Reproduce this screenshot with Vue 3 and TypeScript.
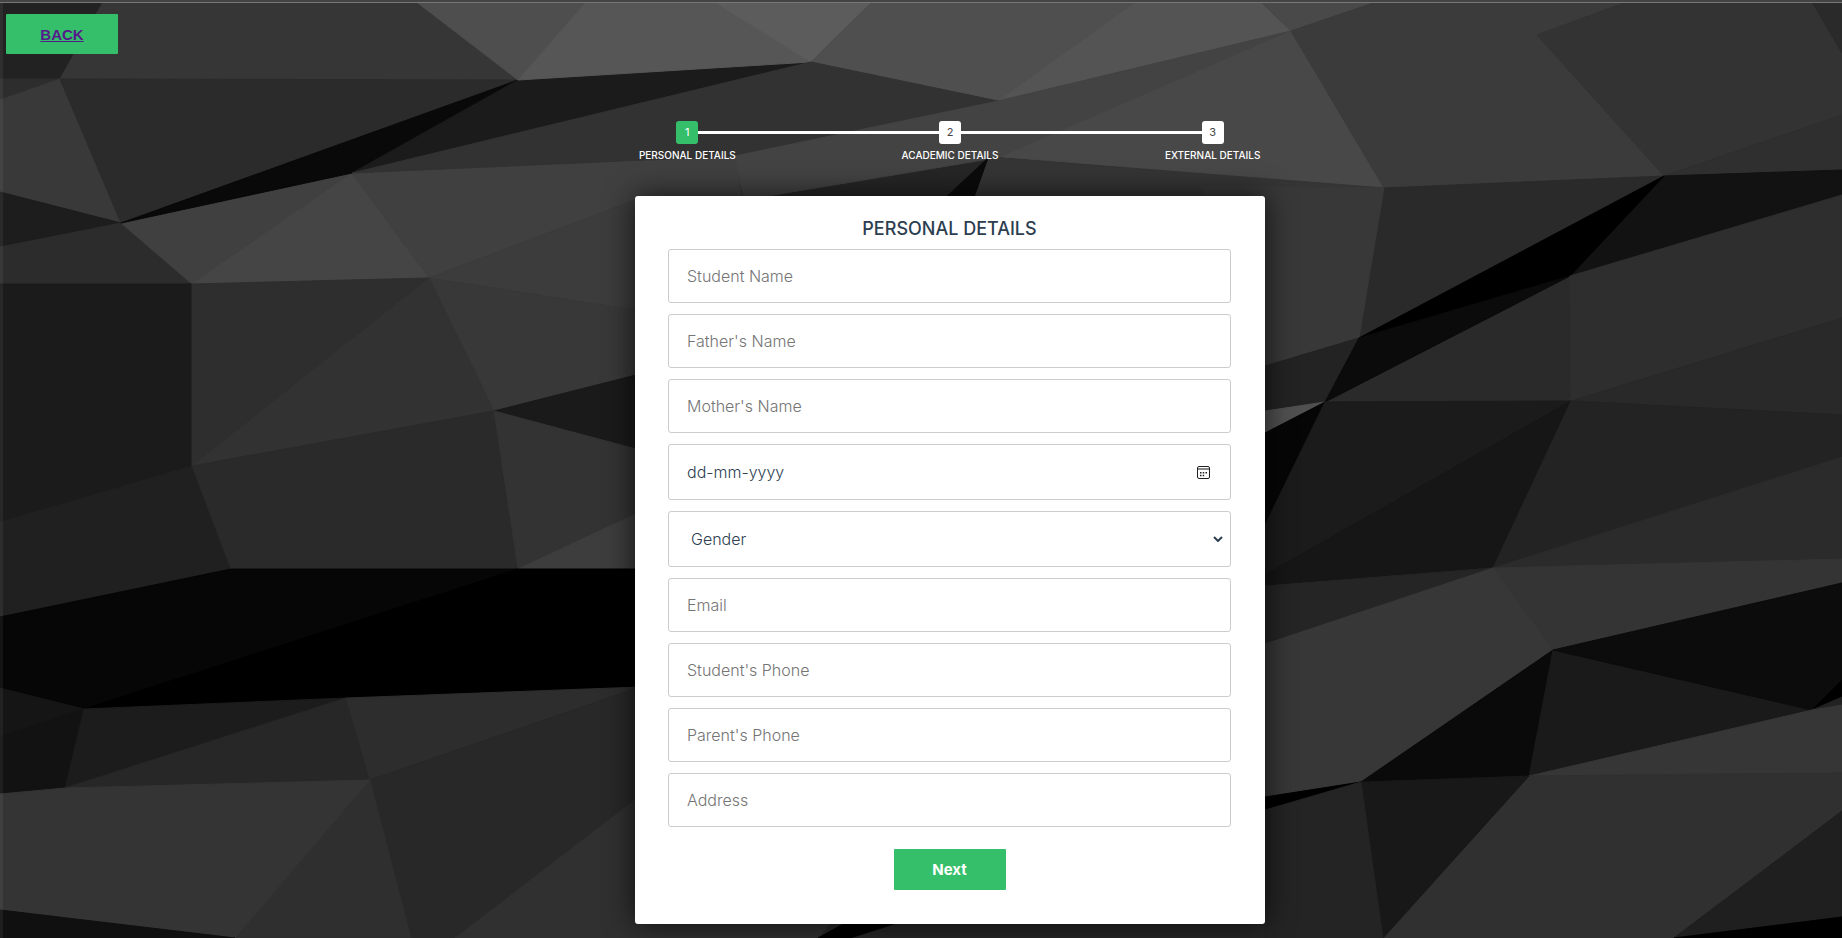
<script setup lang="ts">
import { reactive } from 'vue'

interface Facet {
  points: string
  fill: string
}

interface Field {
  id: string
  label: string
  kind: 'text' | 'email' | 'tel' | 'date' | 'select'
}

const steps: string[] = ['Personal Details', 'Academic Details', 'External Details']

const fields: Field[] = [
  { id: 'student', label: 'Student Name', kind: 'text' },
  { id: 'father', label: "Father's Name", kind: 'text' },
  { id: 'mother', label: "Mother's Name", kind: 'text' },
  { id: 'birth', label: 'dd-mm-yyyy', kind: 'date' },
  { id: 'gender', label: 'Gender', kind: 'select' },
  { id: 'email', label: 'Email', kind: 'email' },
  { id: 'phone', label: "Student's Phone", kind: 'tel' },
  { id: 'parentPhone', label: "Parent's Phone", kind: 'tel' },
  { id: 'address', label: 'Address', kind: 'text' },
]

const values = reactive<Record<string, string>>(
  Object.fromEntries(fields.map((f) => [f.id, ''])),
)

const facet = (fill: string, points: string): Facet => ({ fill, points })

const facets: Facet[] = [
  // upper left
  facet('#222222', '0,0 104,0 60,79 0,79'),
  facet('#363636', '104,0 414,0 518,80 60,79'),
  facet('#2d2d2d', '0,79 60,79 0,100'),
  facet('#393939', '60,79 0,100 0,192 121,223'),
  facet('#2b2b2b', '60,79 518,80 121,223'),
  facet('#1d1d1d', '0,192 121,223 0,247'),
  facet('#2c2c2c', '0,247 121,223 192,284 0,284'),
  facet('#404040', '121,223 352,173 192,284'),
  facet('#454545', '352,173 429,278 192,284'),
  facet('#404040', '352,173 735,156 744,210 635,200 429,278'),
  facet('#3c3c3c', '429,278 635,200 744,200 744,400 635,310'),
  facet('#383838', '429,278 635,310 635,375 494,411'),
  facet('#090909', '121,223 518,80 352,173'),
  facet('#1b1b1b', '518,80 811,62 352,173'),
  // upper middle
  facet('#4e4e4e', '414,0 588,0 518,80'),
  facet('#565656', '588,0 711,0 811,62 518,80'),
  facet('#5c5c5c', '711,0 874,0 811,62'),
  facet('#4f4f4f', '874,0 1139,0 998,101 811,62'),
  facet('#545454', '1139,0 1259,0 1291,31 998,101'),
  facet('#323232', '811,62 998,101 735,156 352,173'),
  facet('#434343', '998,101 1291,31 1001,157 744,200 735,156'),
  facet('#484848', '1291,31 1384,188 1001,157'),
  facet('#353535', '988,157 1384,188 1265,300 973,200'),
  facet('#0b0b0b', '988,158 973,200 943,200'),
  facet('#494949', '1259,0 1382,0 1291,31'),
  // upper right
  facet('#3b3b3b', '1382,0 1632,0 1537,35 1664,176 1384,188 1291,31'),
  facet('#333333', '1632,0 1811,0 1842,53 1842,115 1664,176 1537,35'),
  facet('#2a2a2a', '1811,0 1842,0 1842,53'),
  facet('#2f2f2f', '1664,176 1842,115 1842,170'),
  facet('#121212', '1664,176 1842,170 1842,195 1570,276'),
  facet('#2a2a2a', '1384,188 1664,176 1359,338'),
  facet('#383838', '1384,188 1359,338 1265,366 1200,186'),
  facet('#232323', '1359,338 1325,402 1265,411 1265,366'),
  facet('#505050', '1325,402 1265,433 1265,411'),
  facet('#2a2a2a', '1570,276 1325,402 1571,401'),
  facet('#000000', '1664,176 1570,276 1359,338'),
  facet('#0b0b0b', '1359,338 1570,276 1325,402'),
  facet('#2e2e2e', '1570,276 1842,195 1842,318 1571,401'),
  facet('#292929', '1571,401 1842,318 1842,415'),
  // lower right
  facet('#060606', '1325,402 1265,525 1265,433'),
  facet('#1b1b1b', '1325,402 1571,401 1265,575 1265,525'),
  facet('#161616', '1571,401 1493,568 1265,586 1265,575'),
  facet('#232323', '1571,401 1842,415 1842,457 1493,568'),
  facet('#2b2b2b', '1493,568 1842,457 1842,559'),
  facet('#343434', '1493,568 1842,559 1842,583 1553,650'),
  facet('#252525', '1493,568 1265,586 1265,644'),
  facet('#373737', '1493,568 1553,650 1361,782 1265,797 1265,644'),
  facet('#0a0a0a', '1553,650 1361,782 1529,776'),
  facet('#1a1a1a', '1553,650 1529,776 1812,710'),
  facet('#0c0c0c', '1553,650 1842,583 1842,680 1812,710'),
  facet('#000000', '1812,710 1842,680 1842,697'),
  facet('#222222', '1812,710 1842,697 1842,705'),
  facet('#363636', '1529,776 1812,710 1842,705 1842,773'),
  facet('#303030', '1529,776 1842,773 1842,811 1674,938 1383,938'),
  facet('#181818', '1361,782 1529,776 1383,938'),
  facet('#000000', '1361,782 1265,797 1265,810'),
  facet('#242424', '1361,782 1265,810 1265,938 1383,938'),
  facet('#1f1f1f', '1842,811 1842,917 1674,938'),
  facet('#000000', '1842,917 1842,938 1674,938'),
  // lower left
  facet('#1b1b1b', '0,284 192,284 192,466 0,522'),
  facet('#202020', '0,522 192,466 231,569 0,617'),
  facet('#2e2e2e', '192,284 429,278 192,466'),
  facet('#323232', '429,278 494,411 192,466'),
  facet('#2a2a2a', '494,411 518,569 231,569 192,466'),
  facet('#1a1a1a', '494,411 640,374 640,450'),
  facet('#333333', '494,411 640,450 640,512 518,569'),
  facet('#3d3d3d', '518,569 640,512 640,569'),
  facet('#060606', '0,617 231,569 518,569 84,709 0,688'),
  facet('#000000', '518,569 640,569 640,687 84,709'),
  facet('#151515', '0,688 84,709 0,737'),
  facet('#121212', '84,709 65,788 0,794 0,737'),
  facet('#1c1c1c', '84,709 346,698 65,788'),
  facet('#272727', '346,698 370,780 65,788'),
  facet('#2d2d2d', '346,698 640,687 370,780'),
  facet('#282828', '370,780 640,687 640,796 455,938 411,938'),
  facet('#2f2f2f', '370,780 411,938 235,938'),
  facet('#343434', '65,788 370,780 235,938 0,910 0,794'),
  facet('#101010', '0,910 235,938 0,938'),
  facet('#303030', '640,796 850,900 818,938 455,938'),
  facet('#000000', '818,938 847,922 900,922 850,938'),
]
</script>

<template>
  <div class="page">
    <svg class="backdrop" viewBox="0 0 1842 938" preserveAspectRatio="none" aria-hidden="true">
      <rect width="1842" height="938" fill="#262626" />
      <polygon
        v-for="(f, i) in facets"
        :key="i"
        :points="f.points"
        :fill="f.fill"
        :stroke="f.fill"
        stroke-width="1"
      />
      <rect y="3" width="3" height="935" fill="#ffffff" fill-opacity="0.06" />
      <rect width="1842" height="2" fill="#444444" />
      <rect y="2" width="1842" height="1" fill="#777777" />
    </svg>

    <nav class="top">
      <a class="button back" href="#">BACK</a>
    </nav>

    <main class="main">
      <ol class="steps">
        <li v-for="(step, i) in steps" :key="step" class="step" :class="{ active: i === 0 }">
          <span class="number">{{ i + 1 }}</span>
          <span class="caption">{{ step }}</span>
        </li>
      </ol>

      <form class="card" @submit.prevent>
        <h2 class="title">Personal Details</h2>
        <div class="fields">
          <template v-for="f in fields" :key="f.id">
            <div v-if="f.kind === 'date'" class="field tall date">
              <input
                v-model="values[f.id]"
                class="date-input"
                type="text"
                :placeholder="f.label"
                aria-label="Date of birth"
              />
              <button class="picker" type="button" aria-label="Open calendar">
                <svg width="13" height="13" viewBox="0 0 13 13" aria-hidden="true">
                  <rect x="0.5" y="0.5" width="12" height="12" rx="1.5" fill="none" stroke="#222" />
                  <rect x="1" y="2" width="11" height="2" fill="#888" />
                  <path
                    d="M3 6h1.5v1.5H3zM5.7 6h1.5v1.5H5.7zM8.5 6h1.5v1.5H8.5zM3 8.7h1.5v1.5H3zM5.7 8.7h1.5v1.5H5.7z"
                    fill="#222"
                  />
                </svg>
              </button>
            </div>
            <div v-else-if="f.kind === 'select'" class="choice">
              <select v-model="values[f.id]" class="field tall select" :aria-label="f.label">
                <option value="">Gender</option>
                <option value="male">Male</option>
                <option value="female">Female</option>
              </select>
              <svg class="chevron" width="10" height="6" viewBox="0 0 10 6" aria-hidden="true">
                <path d="M1 1l4 4 4-4" fill="none" stroke="#2c3e50" stroke-width="2" />
              </svg>
            </div>
            <input
              v-else
              v-model="values[f.id]"
              class="field"
              :type="f.kind"
              :placeholder="f.label"
              :aria-label="f.label"
            />
          </template>
        </div>
        <button class="button next" type="submit">Next</button>
      </form>
    </main>
  </div>
</template>

<style>
body {
  margin: 0;
  background: #262626;
}
</style>

<style scoped>
.page {
  position: relative;
  box-sizing: border-box;
  min-height: 100vh;
  padding: 14px 6px 12px;
  font-family: Inter, 'Open Sans', sans-serif;
  color: #2c3e50;
}

.backdrop {
  position: absolute;
  inset: 0;
  width: 100%;
  height: 100%;
}

.top,
.main {
  position: relative;
}

.top {
  display: flex;
}

.button {
  display: flex;
  align-items: center;
  justify-content: center;
  box-sizing: border-box;
  width: 112px;
  height: 40px;
  border: 0;
  border-radius: 1px;
  background: #36bf6a;
  font-size: 15px;
  font-weight: 700;
  cursor: pointer;
}

.back {
  font-family: 'Liberation Sans', Arial, sans-serif;
  color: #551a8b;
  text-decoration: underline;
}

.main {
  display: flex;
  flex-direction: column;
  align-items: center;
  margin-left: 58px;
  padding-top: 67px;
}

.steps {
  display: grid;
  grid-template-columns: repeat(3, 1fr);
  width: 100%;
  max-width: 788px;
  margin: 0 0 34px;
  padding: 0;
  list-style: none;
}

.step {
  position: relative;
  display: flex;
  flex-direction: column;
  align-items: center;
  gap: 4px;
}

.step + .step::before {
  content: '';
  position: absolute;
  top: 10px;
  right: 50%;
  width: 100%;
  height: 3px;
  background: #fff;
}

.number {
  position: relative;
  z-index: 1;
  width: 22px;
  border-radius: 3px;
  background: #fff;
  color: #444;
  font-size: 11px;
  line-height: 23px;
  text-align: center;
}

.active .number {
  background: #36bf6a;
  color: #fff;
}

.caption {
  color: #fff;
  font-size: 10px;
  font-weight: 500;
  line-height: 14px;
  text-transform: uppercase;
}

.card {
  display: flex;
  flex-direction: column;
  align-items: center;
  box-sizing: border-box;
  width: 100%;
  max-width: 630px;
  padding: 23px 34px 34px 33px;
  border-radius: 3px;
  background: #fff;
  box-shadow: 0 0 30px rgba(0, 0, 0, 0.7);
}

.title {
  margin: 0 0 10px;
  font-size: 18px;
  font-weight: 500;
  line-height: 20px;
  text-transform: uppercase;
}

.fields {
  display: flex;
  flex-direction: column;
  gap: 11px;
  width: 100%;
  margin-bottom: 22px;
}

.field {
  box-sizing: border-box;
  width: 100%;
  height: 54px;
  padding: 0 18px;
  border: 1px solid #ccc;
  border-radius: 3px;
  background: #fff;
  color: #2c3e50;
  font-family: inherit;
  font-size: 16px;
  font-weight: 300;
}

.field::placeholder {
  color: #757575;
}

.tall {
  height: 56px;
}

.date {
  display: flex;
  align-items: center;
  padding-right: 20px;
}

.date-input {
  flex: 1;
  min-width: 0;
  padding: 0;
  border: 0;
  background: none;
  color: inherit;
  font: inherit;
}

.date-input::placeholder {
  color: #2c3e50;
}

.picker {
  display: flex;
  padding: 0;
  border: 0;
  background: none;
  cursor: pointer;
}

.choice {
  position: relative;
  display: flex;
}

.select {
  padding: 0 22px;
  appearance: none;
}

.chevron {
  position: absolute;
  top: 25px;
  right: 8px;
  pointer-events: none;
}

.next {
  height: 41px;
  color: #fff;
  font-family: inherit;
}
</style>
